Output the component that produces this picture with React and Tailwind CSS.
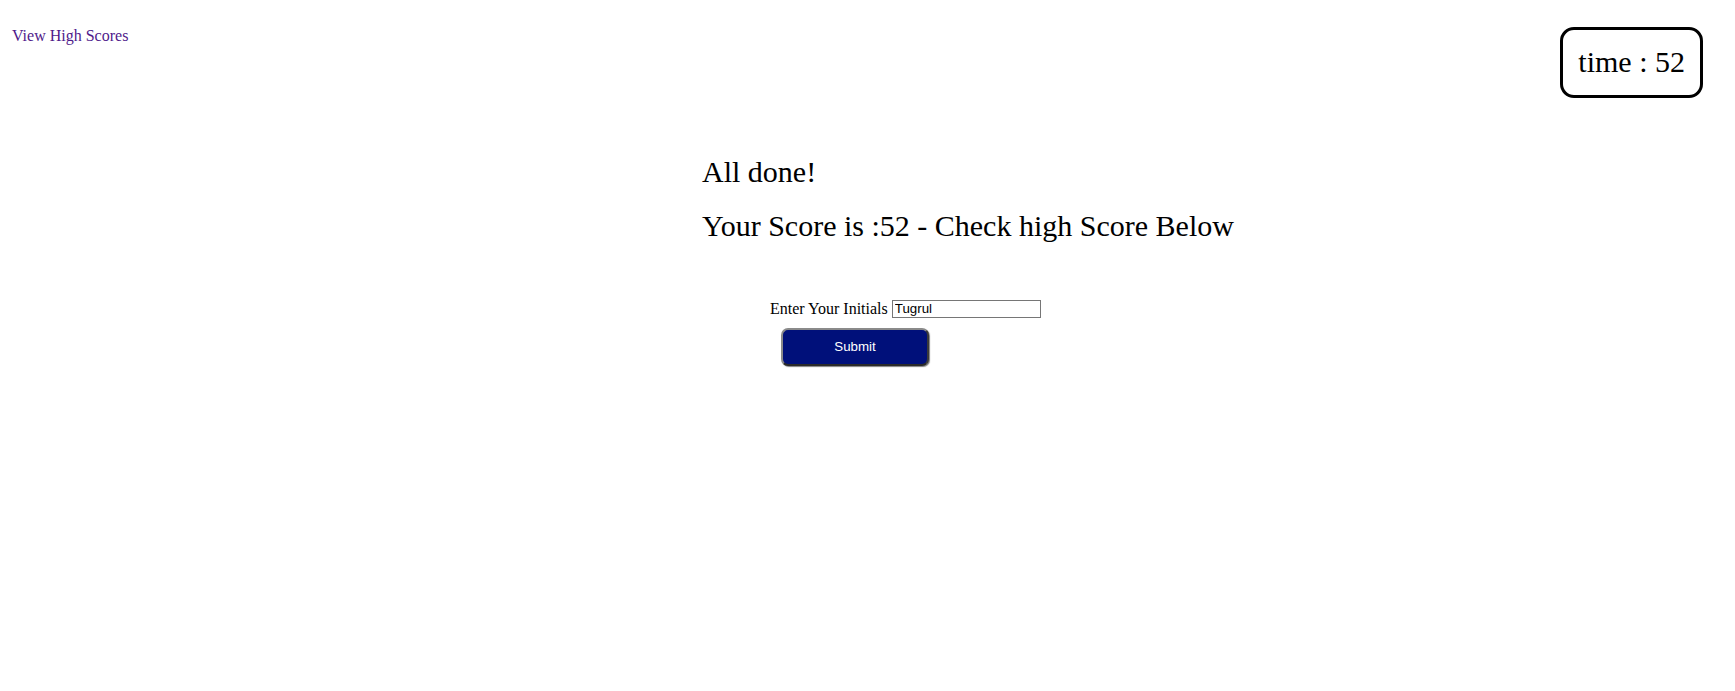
import React from 'react';

const App = () => {
    return (
        <div className="min-h-[691px] bg-white text-black font-['Liberation_Serif','Times_New_Roman',serif]">
            {/* Top bar */}
            <div className="flex items-start justify-between">
                <a href="#" className="ml-[12px] mt-[27px] text-[16px] leading-[18.4px] text-[#4f1a8b]">
                    View High Scores
                </a>
                <div className="mt-[27px] mr-[32px] border-[3px] border-black rounded-[14px] px-[15px] py-[15px] text-[30px] leading-[34.5px]">
                    time : 52
                </div>
            </div>

            {/* Result */}
            <div className="ml-[702px] mt-[57px]">
                <h2 className="text-[30px] leading-[34.5px] font-normal">All done!</h2>
                <h2 className="mt-[20px] text-[30px] leading-[34.5px] font-normal">
                    Your Score is :52 - Check high Score Below
                </h2>

                <form className="ml-[68px] mt-[56px]" onSubmit={e => e.preventDefault()}>
                    <div className="flex items-center gap-[4px]">
                        <label htmlFor="initials" className="text-[16px] leading-[18px]">Enter Your Initials</label>
                        <input
                            id="initials"
                            type="text"
                            defaultValue="Tugrul"
                            className="w-[149px] h-[18px] border border-[#767676] px-[2px] text-[13.33px] leading-[16px] text-black font-['Liberation_Sans',Arial,sans-serif] outline-none"
                        />
                    </div>
                    <button
                        type="submit"
                        className="ml-[11px] mt-[10px] flex h-[38px] w-[148px] items-center justify-center rounded-[7px] border-2 border-t-[#8a8a8a] border-l-[#8a8a8a] border-r-[#3a3a3a] border-b-[#2a2a2a] bg-[#00107a] text-[13.33px] text-white shadow-[1px_1px_1px_rgba(0,0,0,0.5)] font-['Liberation_Sans',Arial,sans-serif]"
                    >
                        Submit
                    </button>
                </form>
            </div>
        </div>
    );
};

export default App;
